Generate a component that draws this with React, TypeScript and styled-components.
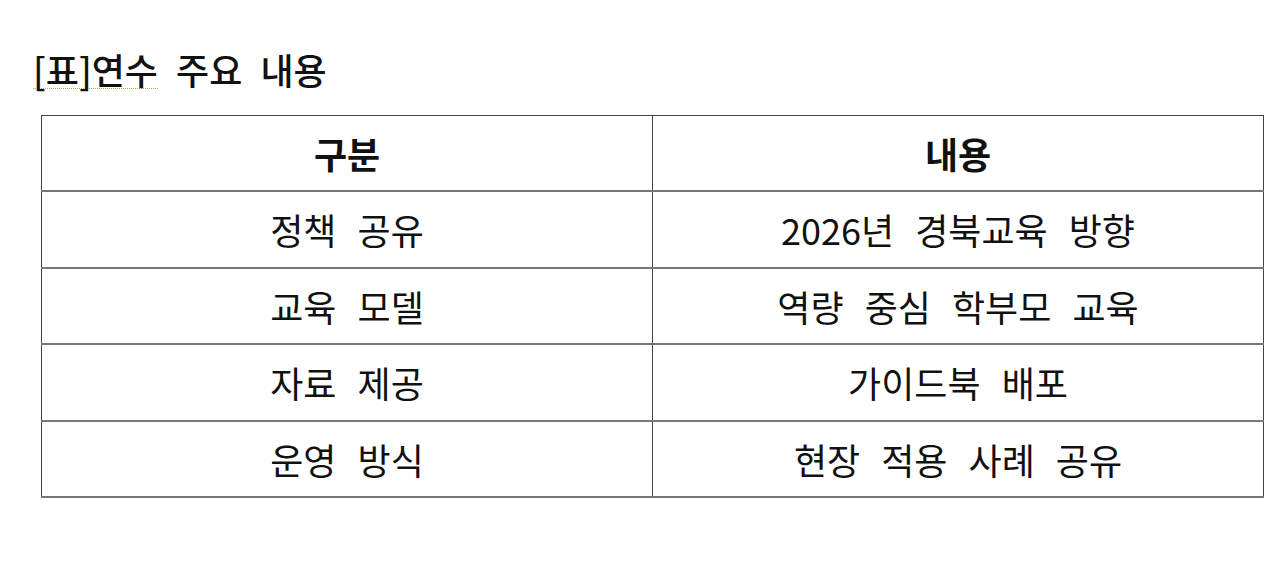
import React from "react";
import styled, { createGlobalStyle } from "styled-components";

const Global = createGlobalStyle`
  html, body { margin: 0; padding: 0; background: #ffffff; }
  body { font-family: "Noto Sans CJK KR", "Noto Sans", sans-serif; color: #111; }
`;

const Page = styled.div`
  width: 1280px;
  height: 567px;
  box-sizing: border-box;
  padding: 44px 17px 0 33px;
  display: flex;
  flex-direction: column;
  overflow: hidden;
`;

const Title = styled.h1`
  margin: 0;
  font-size: 36px;
  font-weight: 500;
  line-height: 50px;
  word-spacing: 10px;
  color: #111;
`;

const Marked = styled.span`
  text-decoration: underline dotted #c8a060;
  text-underline-offset: 3px;
  text-decoration-thickness: 1px;
`;

const Table = styled.table`
  margin: 21px 0 0 8px;
  width: 1223px;
  border-collapse: collapse;
  table-layout: fixed;
  border: 1px solid #444;
`;

const Cell = styled.td<{ $head?: boolean }>`
  height: ${(p) => (p.$head ? 74 : 74.5)}px;
  padding: 0;
  text-align: center;
  vertical-align: middle;
  font-size: 36px;
  line-height: 40px;
  font-weight: ${(p) => (p.$head ? 700 : 400)};
  color: #111;
  word-spacing: 13px;
  border-left: 1px solid #444;
  border-right: 1px solid #444;
  border-bottom: 2px solid #777;
  &:first-child { width: 610px; }
`;

const rows: [string, string][] = [
  ["정책 공유", "2026년 경북교육 방향"],
  ["교육 모델", "역량 중심 학부모 교육"],
  ["자료 제공", "가이드북 배포"],
  ["운영 방식", "현장 적용 사례 공유"],
];

export default function App() {
  return (
    <>
      <Global />
      <Page>
        <Title>
          <Marked>[표]연수</Marked> 주요 내용
        </Title>
        <Table>
          <tbody>
            <tr>
              <Cell $head>구분</Cell>
              <Cell $head>내용</Cell>
            </tr>
            {rows.map(([a, b]) => (
              <tr key={a}>
                <Cell>{a}</Cell>
                <Cell>{b}</Cell>
              </tr>
            ))}
          </tbody>
        </Table>
      </Page>
    </>
  );
}
